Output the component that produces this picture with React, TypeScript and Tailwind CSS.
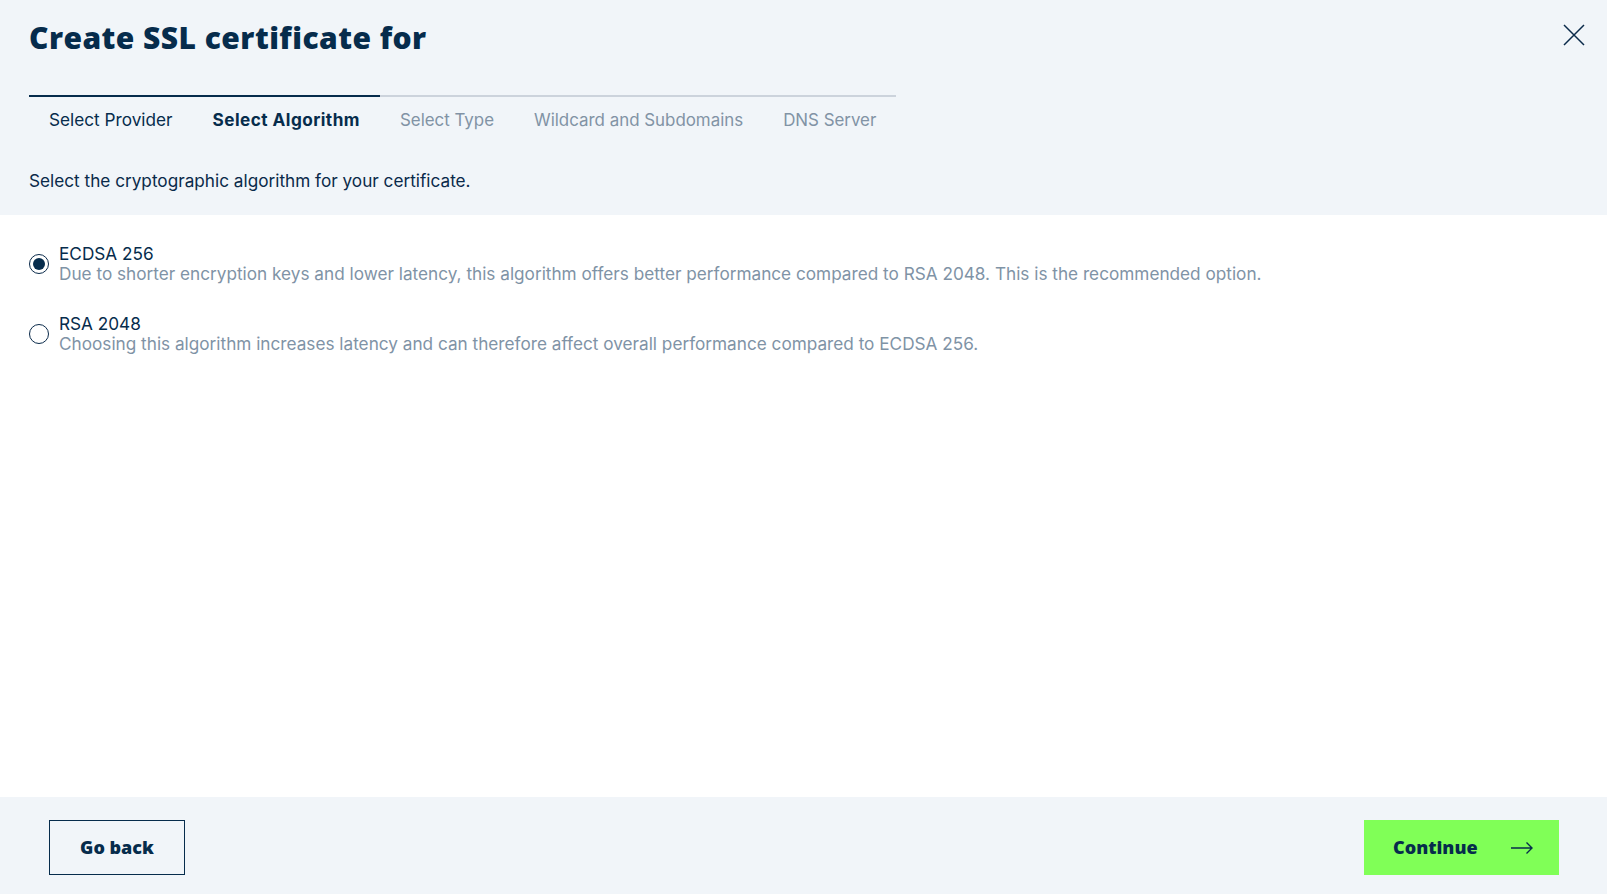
const steps = [
  { label: 'Select Provider', state: 'done' },
  { label: 'Select Algorithm', state: 'current' },
  { label: 'Select Type', state: 'todo' },
  { label: 'Wildcard and Subdomains', state: 'todo' },
  { label: 'DNS Server', state: 'todo' },
]

const algorithms = [
  {
    id: 'ecdsa',
    name: 'ECDSA 256',
    desc: 'Due to shorter encryption keys and lower latency, this algorithm offers better performance compared to RSA 2048. This is the recommended option.',
  },
  {
    id: 'rsa',
    name: 'RSA 2048',
    desc: 'Choosing this algorithm increases latency and can therefore affect overall performance compared to ECDSA 256.',
  },
]

export default function App() {
  const selected = 'ecdsa'

  return (
    <div className="h-[894px] flex flex-col bg-white text-[#0a2a4a] font-['Inter',sans-serif]">
      {/* HEADER */}
      <header className="relative bg-[#f1f5f9] px-[29px] pt-[19px] pb-[22px]">
        <h1 className="font-['Open_Sans',sans-serif] font-extrabold text-[30px] leading-[38px] tracking-[0.45px] text-[#062c4c]">
          Create SSL certificate for
        </h1>
        <button className="absolute right-[22px] top-[24px]">
          <svg width="22" height="22" viewBox="0 0 22 22" fill="none" stroke="#0a2a4a" strokeWidth="1.5">
            <path d="M1 1l20 20M21 1 1 21" />
          </svg>
        </button>

        <nav className="flex mt-[38px] w-fit">
          {steps.map((s) => (
            <div
              key={s.label}
              className={
                'px-5 pt-[11px] pb-[8px] border-t-2 leading-[24px] ' +
                (s.state === 'todo'
                  ? 'border-[#ccd3dc] text-[#8193a5] text-[16.9px]'
                  : 'border-[#062c4c] text-[#062c4c] text-[17.2px]') +
                (s.state === 'current' ? ' font-bold tracking-[0.45px]' : '')
              }
            >
              {s.label}
            </div>
          ))}
        </nav>

        <p className="mt-[29px] text-[17.2px] leading-[24px] text-[#0a2a4a]">
          Select the cryptographic algorithm for your certificate.
        </p>
      </header>

      {/* OPTIONS */}
      <main className="flex-1 px-[29px] pt-[29px] flex flex-col gap-[30px]">
        {algorithms.map((a) => (
          <label key={a.id} className="flex items-center gap-[10px] cursor-pointer">
            <span className="w-[20px] h-[20px] rounded-full border-[1.5px] border-[#0a2a4a] flex items-center justify-center shrink-0">
              {selected === a.id && <span className="w-[12px] h-[12px] rounded-full bg-[#062c4c]" />}
            </span>
            <span className="flex flex-col">
              <span className="text-[17.2px] leading-[20px] text-[#062c4c]">{a.name}</span>
              <span className="text-[17.2px] leading-[20px] text-[#7f93a6]">{a.desc}</span>
            </span>
          </label>
        ))}
      </main>

      {/* FOOTER */}
      <footer className="bg-[#f1f5f9] h-[97px] px-[49px] pt-[23px] flex items-start justify-between">
        <button className="h-[55px] w-[136px] border border-[#062c4c] font-['Open_Sans',sans-serif] font-extrabold text-[18px] text-[#062c4c]">
          Go back
        </button>
        <button className="h-[55px] w-[195px] mr-[-1px] bg-[#80ff57] flex items-center pl-[29px] pr-[26px] justify-between font-['Open_Sans',sans-serif] font-extrabold text-[18px] text-[#062c4c]">
          Continue
          <svg width="22" height="12" viewBox="0 0 22 12" fill="none" stroke="#062c4c" strokeWidth="1.4">
            <path d="M0 6h21M15.5 0.5 21 6l-5.5 5.5" />
          </svg>
        </button>
      </footer>
    </div>
  )
}
